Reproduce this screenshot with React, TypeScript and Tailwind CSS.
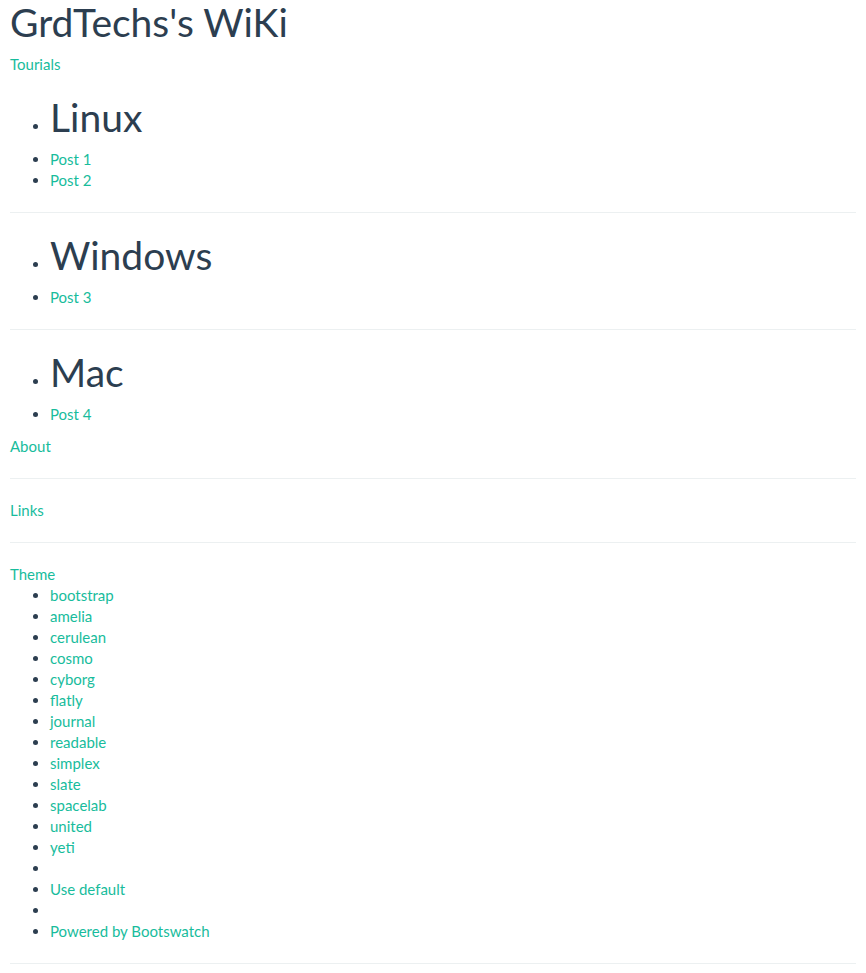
const sections = [
  { title: 'Linux', posts: ['Post 1', 'Post 2'] },
  { title: 'Windows', posts: ['Post 3'] },
  { title: 'Mac', posts: ['Post 4'] },
]

const themes = [
  'bootstrap',
  'amelia',
  'cerulean',
  'cosmo',
  'cyborg',
  'flatly',
  'journal',
  'readable',
  'simplex',
  'slate',
  'spacelab',
  'united',
  'yeti',
  '',
  'Use default',
  '',
  'Powered by Bootswatch',
]

function Rule() {
  return <hr className="my-[21px] border-0 border-t border-[#ecf0f1]" />
}

export default function App() {
  return (
    <div
      className="min-h-screen bg-white px-[10px] pt-[1px] text-[15px] leading-[21px] text-[#2c3e50]"
      style={{ fontFamily: 'Lato, "Open Sans", Arial, sans-serif' }}
    >
      <h1 className="mb-[10.5px] text-[39px] font-normal leading-[1.1]">GrdTechs's WiKi</h1>
      <a href="#" className="block text-[#18bc9c]">
        Tourials
      </a>

      {sections.map((s, i) => (
        <div key={s.title}>
          {i > 0 && <Rule />}
          <ul className="list-disc pl-[40px]">
            <li>
              <h1 className="mt-[21px] mb-[10px] text-[39px] font-normal leading-[1.1]">{s.title}</h1>
            </li>
          </ul>
          <ul className="list-disc pl-[40px]">
            {s.posts.map((p) => (
              <li key={p}>
                <a href="#" className="text-[#18bc9c]">
                  {p}
                </a>
              </li>
            ))}
          </ul>
        </div>
      ))}

      <a href="#" className="mt-[10.5px] block text-[#18bc9c]">
        About
      </a>
      <Rule />
      <a href="#" className="block text-[#18bc9c]">
        Links
      </a>
      <Rule />
      <a href="#" className="block text-[#18bc9c]">
        Theme
      </a>
      <ul className="list-disc pl-[40px]">
        {themes.map((t, i) => (
          <li key={i}>
            {t ? (
              <a href="#" className="text-[#18bc9c]">
                {t}
              </a>
            ) : (
              '\u00a0'
            )}
          </li>
        ))}
      </ul>
      <Rule />
    </div>
  )
}
